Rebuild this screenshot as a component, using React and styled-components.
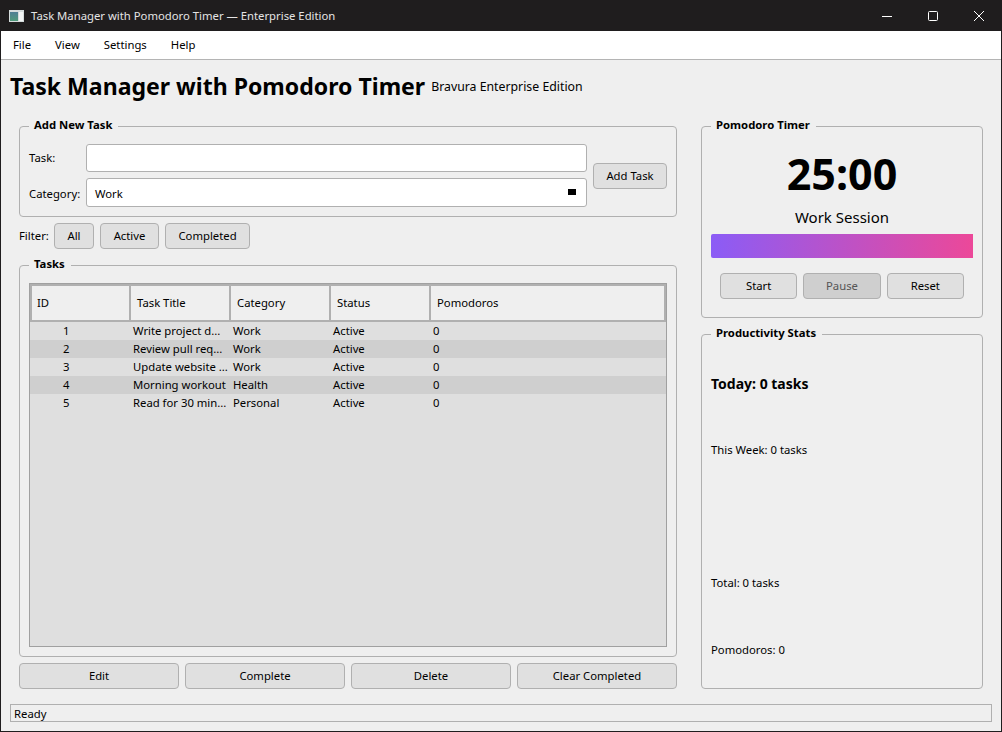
import styled, { createGlobalStyle } from "styled-components";

const GlobalStyle = createGlobalStyle`
    html, body {
        margin: 0;
        padding: 0;
        background: #efefef;
    }
    * {
        box-sizing: border-box;
    }
`;

const Window = styled.div`
    width: 1002px;
    height: 732px;
    display: flex;
    flex-direction: column;
    overflow: hidden;
    background: #efefef;
    border-left: 1px solid #1f1d1e;
    border-right: 1px solid #1f1d1e;
    border-bottom: 1px solid #1f1d1e;
    color: #000;
    font-family: "Noto Sans", "Open Sans", sans-serif;
    font-size: 11.3px;
    line-height: 14px;
`;

const TitleBar = styled.div`
    height: 31px;
    margin: 0 -1px;
    flex: none;
    display: flex;
    align-items: center;
    background: #1f1d1e;
    color: #e4e4e4;
    padding-left: 9px;
`;

const TitleText = styled.span`
    margin-left: 7px;
    font-size: 11.3px;
    white-space: nowrap;
`;

const WindowControls = styled.div`
    margin-left: auto;
    display: flex;
    align-items: center;
`;

const WindowControl = styled.div`
    width: 46px;
    height: 31px;
    display: flex;
    align-items: center;
    justify-content: center;
`;

const MenuBar = styled.div`
    height: 29px;
    flex: none;
    display: flex;
    align-items: center;
    gap: 24px;
    padding-left: 12px;
    background: #fff;
    border-bottom: 1px solid #b4b4b4;
`;

const Header = styled.div`
    height: 54px;
    flex: none;
    display: flex;
    align-items: center;
    gap: 6px;
    padding-left: 9px;
`;

const Heading = styled.h1`
    margin: 0 0 2px;
    font-size: 23.05px;
    line-height: 32px;
    font-weight: 700;
    white-space: nowrap;
`;

const Subheading = styled.span`
    font-size: 12.3px;
    line-height: 16px;
`;

const Body = styled.div`
    margin-top: 12px;
    height: 563px;
    flex: none;
    display: flex;
    gap: 24px;
    padding-left: 18px;
`;

const LeftColumn = styled.div`
    width: 658px;
    display: flex;
    flex-direction: column;
`;

const RightColumn = styled.div`
    width: 282px;
    display: flex;
    flex-direction: column;
    gap: 16px;
`;

const Group = styled.section`
    position: relative;
    border: 1px solid #b0b0b0;
    border-radius: 4px;
`;

const Legend = styled.div`
    position: absolute;
    top: -10px;
    left: 9px;
    padding: 0 6px 0 5px;
    background: #efefef;
    font-size: 11.3px;
    font-weight: 700;
    line-height: 16px;
`;

const AddTaskGroup = styled(Group)`
    height: 91px;
    display: flex;
    align-items: center;
    gap: 6px;
    padding: 17px 9px 9px 9px;
`;

const FormGrid = styled.div`
    flex: 1;
    display: grid;
    grid-template-columns: 57px 1fr;
    row-gap: 6px;
    align-items: center;
`;

const FieldLabel = styled.span`
    padding-top: ${(p) => (p.$low ? 2 : 0)}px;
`;

const TextField = styled.div`
    height: ${(p) => p.$height}px;
    background: #fff;
    border: 1px solid #b0b0b0;
    border-radius: 3px;
    display: flex;
    align-items: center;
    justify-content: space-between;
    padding: 0 10px 0 8px;
`;

const FieldValue = styled.span`
    padding-top: 2px;
`;

const DropMarker = styled.span`
    width: 8px;
    height: 6px;
    background: #000;
    margin-bottom: 2px;
`;

const Button = styled.div`
    height: 26px;
    width: ${(p) => (p.$width ? `${p.$width}px` : "auto")};
    flex: ${(p) => (p.$grow ? 1 : "none")};
    display: flex;
    align-items: center;
    justify-content: center;
    background: ${(p) => (p.$disabled ? "#cfcfcf" : "#e0e0e0")};
    color: ${(p) => (p.$disabled ? "#555" : "#000")};
    border: 1px solid #b0b0b0;
    border-radius: 4px;
    white-space: nowrap;
`;

const FilterRow = styled.div`
    margin-top: 6px;
    height: 26px;
    flex: none;
    display: flex;
    align-items: center;
    gap: 6px;
`;

const FilterLabel = styled.span`
    width: 29px;
    white-space: nowrap;
`;

const TasksGroup = styled(Group)`
    margin-top: 16px;
    height: 392px;
    flex: none;
    padding: 17px 9px 9px 9px;
    display: flex;
`;

const Table = styled.div`
    flex: 1;
    background: #dfdfdf;
    border: 1px solid #a0a0a0;
`;

const HeaderRow = styled.div`
    height: 38px;
    display: grid;
    grid-template-columns: 99px 100px 100px 100px 1fr;
    background: #efefef;
    border-right: 2px solid #b0b0b0;
`;

const HeaderCell = styled.div`
    display: flex;
    align-items: center;
    padding-left: ${(p) => (p.$first ? 5 : 6)}px;
    border-top: 2px solid #b0b0b0;
    border-bottom: 2px solid #b0b0b0;
    border-left: 2px solid #b0b0b0;
`;

const Row = styled.div`
    height: 18px;
    display: grid;
    grid-template-columns: 100px 100px 100px 100px 1fr;
    align-items: center;
    background: ${(p) => (p.$alt ? "#cfcfcf" : "#dfdfdf")};
`;

const Cell = styled.div`
    padding-left: ${(p) => (p.$id ? 33 : 3)}px;
    white-space: nowrap;
    overflow: hidden;
`;

const ActionRow = styled.div`
    margin-top: 6px;
    display: flex;
    gap: 6px;
`;

const TimerGroup = styled(Group)`
    height: 192px;
    flex: none;
    display: flex;
    flex-direction: column;
    padding: 0 9px;
`;

const TimerText = styled.div`
    margin-top: 17px;
    height: 60px;
    display: flex;
    align-items: center;
    justify-content: center;
    font-size: 43px;
    line-height: 60px;
    font-weight: 700;
`;

const SessionLabel = styled.div`
    margin-top: 1px;
    height: 24px;
    display: flex;
    align-items: center;
    justify-content: center;
    font-size: 15px;
    line-height: 20px;
`;

const ProgressBar = styled.div`
    margin-top: 5px;
    height: 24px;
    flex: none;
    background: linear-gradient(90deg, #8b5cf6, #ec4899);
    border-radius: 2px 0 0 2px;
`;

const TimerButtons = styled.div`
    margin-top: 15px;
    padding: 0 9px;
    display: flex;
    gap: 6px;
`;

const StatsGroup = styled(Group)`
    height: 355px;
    flex: none;
    display: flex;
    flex-direction: column;
    padding: 0 9px;
`;

const StatLine = styled.div`
    margin-top: ${(p) => p.$top}px;
    font-size: ${(p) => (p.$big ? 14 : 11.3)}px;
    font-weight: ${(p) => (p.$big ? 700 : 400)};
    line-height: 16px;
`;

const StatusBar = styled.div`
    margin: 15px 9px 0 9px;
    height: 18px;
    flex: none;
    display: flex;
    align-items: center;
    padding: 2px 0 0 3px;
    border: 1px solid #b0b0b0;
`;

const AppIcon = () => (
    <svg width="15" height="12" viewBox="0 0 15 12">
        <defs>
            <linearGradient id="appIconFill" x1="0" y1="0" x2="0" y2="1">
                <stop offset="0" stopColor="#4f7f95" />
                <stop offset="1" stopColor="#4f9a7a" />
            </linearGradient>
        </defs>
        <rect width="15" height="12" fill="#d5dcdc" />
        <rect x="1" y="2" width="8" height="9" fill="url(#appIconFill)" />
        <rect x="10" y="2" width="4" height="9" fill="#f2f5f5" />
    </svg>
);

const MinimizeIcon = () => (
    <svg width="12" height="12" viewBox="0 0 12 12">
        <path d="M1 6.5h10" stroke="#fff" strokeWidth="1" />
    </svg>
);

const MaximizeIcon = () => (
    <svg width="12" height="12" viewBox="0 0 12 12">
        <rect x="1.5" y="1.5" width="9" height="9" rx="1" fill="none" stroke="#fff" strokeWidth="1" />
    </svg>
);

const CloseIcon = () => (
    <svg width="12" height="12" viewBox="0 0 12 12">
        <path d="M1 1l10 10M11 1L1 11" stroke="#fff" strokeWidth="1" />
    </svg>
);

const tasks = [
    ["1", "Write project d...", "Work"],
    ["2", "Review pull req...", "Work"],
    ["3", "Update website ...", "Work"],
    ["4", "Morning workout", "Health"],
    ["5", "Read for 30 min...", "Personal"],
];

const App = () => {
    return (
        <Window>
            <GlobalStyle />
            <TitleBar>
                <AppIcon />
                <TitleText>Task Manager with Pomodoro Timer — Enterprise Edition</TitleText>
                <WindowControls>
                    <WindowControl><MinimizeIcon /></WindowControl>
                    <WindowControl><MaximizeIcon /></WindowControl>
                    <WindowControl><CloseIcon /></WindowControl>
                </WindowControls>
            </TitleBar>
            <MenuBar>
                <span>File</span>
                <span>View</span>
                <span>Settings</span>
                <span>Help</span>
            </MenuBar>
            <Header>
                <Heading>Task Manager with Pomodoro Timer</Heading>
                <Subheading>Bravura Enterprise Edition</Subheading>
            </Header>
            <Body>
                <LeftColumn>
                    <AddTaskGroup>
                        <Legend>Add New Task</Legend>
                        <FormGrid>
                            <FieldLabel>Task:</FieldLabel>
                            <TextField $height={28} />
                            <FieldLabel $low>Category:</FieldLabel>
                            <TextField $height={29}>
                                <FieldValue>Work</FieldValue>
                                <DropMarker />
                            </TextField>
                        </FormGrid>
                        <Button $width={74}>Add Task</Button>
                    </AddTaskGroup>
                    <FilterRow>
                        <FilterLabel>Filter:</FilterLabel>
                        <Button $width={40}>All</Button>
                        <Button $width={59}>Active</Button>
                        <Button $width={85}>Completed</Button>
                    </FilterRow>
                    <TasksGroup>
                        <Legend>Tasks</Legend>
                        <Table>
                            <HeaderRow>
                                <HeaderCell $first>ID</HeaderCell>
                                <HeaderCell>Task Title</HeaderCell>
                                <HeaderCell>Category</HeaderCell>
                                <HeaderCell>Status</HeaderCell>
                                <HeaderCell>Pomodoros</HeaderCell>
                            </HeaderRow>
                            {tasks.map((t, i) => (
                                <Row key={t[0]} $alt={i % 2 === 1}>
                                    <Cell $id>{t[0]}</Cell>
                                    <Cell>{t[1]}</Cell>
                                    <Cell>{t[2]}</Cell>
                                    <Cell>Active</Cell>
                                    <Cell>0</Cell>
                                </Row>
                            ))}
                        </Table>
                    </TasksGroup>
                    <ActionRow>
                        <Button $grow>Edit</Button>
                        <Button $grow>Complete</Button>
                        <Button $grow>Delete</Button>
                        <Button $grow>Clear Completed</Button>
                    </ActionRow>
                </LeftColumn>
                <RightColumn>
                    <TimerGroup>
                        <Legend>Pomodoro Timer</Legend>
                        <TimerText>25:00</TimerText>
                        <SessionLabel>Work Session</SessionLabel>
                        <ProgressBar />
                        <TimerButtons>
                            <Button $grow>Start</Button>
                            <Button $grow $disabled>Pause</Button>
                            <Button $grow>Reset</Button>
                        </TimerButtons>
                    </TimerGroup>
                    <StatsGroup>
                        <Legend>Productivity Stats</Legend>
                        <StatLine $big $top={41}>Today: 0 tasks</StatLine>
                        <StatLine $top={50}>This Week: 0 tasks</StatLine>
                        <StatLine $top={117}>Total: 0 tasks</StatLine>
                        <StatLine $top={51}>Pomodoros: 0</StatLine>
                    </StatsGroup>
                </RightColumn>
            </Body>
            <StatusBar>Ready</StatusBar>
        </Window>
    );
};

export default App;
